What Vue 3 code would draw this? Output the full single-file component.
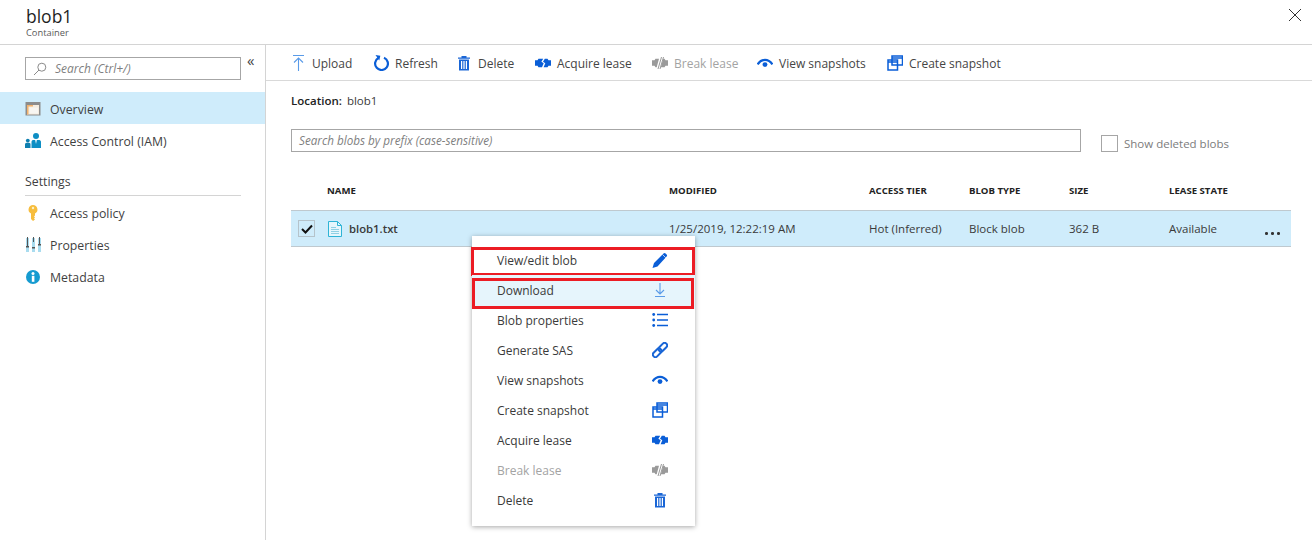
<template>
  <div class="blade">
    <header class="blade-head">
      <div>
        <h1 class="title">blob1</h1>
        <div class="subtitle">Container</div>
      </div>
      <svg class="close" width="14" height="14" viewBox="0 0 14 14" aria-label="Close">
        <path d="M1 1l12 12M13 1L1 13" stroke="#333" stroke-width="1" fill="none" />
      </svg>
    </header>

    <div class="blade-body">
      <aside class="side">
        <div class="search-row">
          <div class="side-search">
            <svg width="14" height="14" viewBox="0 0 14 14">
              <circle cx="8.8" cy="5.2" r="4" fill="none" stroke="#8a8a8a" />
              <path d="M6 8L1 13" stroke="#8a8a8a" fill="none" />
            </svg>
            <span>Search (Ctrl+/)</span>
          </div>
          <span class="collapse">«</span>
        </div>

        <nav class="nav top-nav">
          <div class="nav-item active">
            <svg width="16" height="16" viewBox="0 0 16 16">
              <rect x="0.500" y="1" width="15" height="13.500" fill="#8c8c8c" />
              <rect x="2" y="4" width="12" height="9.500" fill="#f5ecdf" />
              <rect x="2" y="4" width="6" height="1.500" fill="#f2b26e" />
              <rect x="2" y="4" width="1.500" height="9.500" fill="#f2b26e" />
              <rect x="4.500" y="6.500" width="8.500" height="6" fill="#f8f6f2" />
            </svg>
            <span>Overview</span>
          </div>
          <div class="nav-item">
            <svg width="16" height="16" viewBox="0 0 16 16">
              <circle cx="11" cy="3" r="3" fill="#0e8ec4" />
              <path d="M6.500 15V9C6.500 7.500 7.500 7 8.500 7h5c1.400 0 2.500.6 2.500 2v6z" fill="#0e8ec4" />
              <path d="M10 7l1 4 1-4z" fill="#d8eef8" />
              <circle cx="2.800" cy="7.600" r="1.900" fill="#0e7fb0" />
              <path d="M0 15v-3.500c0-1 .7-1.700 1.700-1.700h2.300c1 0 1.500.7 1.500 1.700V15z" fill="#0e7fb0" />
            </svg>
            <span>Access Control (IAM)</span>
          </div>
        </nav>

        <div class="nav-group">Settings</div>

        <nav class="nav">
          <div class="nav-item">
            <svg width="16" height="16" viewBox="0 0 16 16">
              <path d="M8 0a4.500 4.500 0 0 0-2 8.500V14l2 2 2-1.500-1-1 1-1-1-1 1-1V8.500A4.500 4.500 0 0 0 8 0z" fill="#f7bd3d" />
              <circle cx="8" cy="3" r="1.200" fill="#fdf0c4" />
            </svg>
            <span>Access policy</span>
          </div>
          <div class="nav-item">
            <svg width="16" height="16" viewBox="0 0 16 16">
              <rect x="1" y="1" width="3" height="14" fill="#a9dcef" />
              <rect x="7" y="1" width="3" height="14" fill="#a9dcef" />
              <rect x="13" y="1" width="3" height="14" fill="#a9dcef" />
              <rect x="2" y="0" width="1" height="9" fill="#555" />
              <rect x="1" y="9" width="3" height="1.500" fill="#555" />
              <rect x="8" y="0" width="1" height="5" fill="#555" />
              <rect x="7" y="10" width="3" height="1.500" fill="#555" />
              <rect x="14" y="0" width="1" height="7" fill="#555" />
              <rect x="13" y="7" width="3" height="1.500" fill="#555" />
            </svg>
            <span>Properties</span>
          </div>
          <div class="nav-item">
            <svg width="16" height="16" viewBox="0 0 16 16">
              <circle cx="8" cy="8" r="7" fill="#169bd0" />
              <rect x="6.800" y="6.800" width="2.600" height="6" fill="#fff" />
              <circle cx="8" cy="4.500" r="1.500" fill="#fff" />
            </svg>
            <span>Metadata</span>
          </div>
        </nav>
      </aside>

      <main class="content">
        <div class="toolbar">
          <div v-for="cmd in commands" :key="cmd.label" class="cmd" :class="{ disabled: cmd.disabled }">
            <svg width="16" height="16" viewBox="0 0 16 16" v-html="icons[cmd.icon]"></svg>
            <span>{{ cmd.label }}</span>
          </div>
        </div>

        <div class="panel">
          <div class="location"><b>Location:</b><span>blob1</span></div>

          <div class="filter-row">
            <div class="prefix-search">Search blobs by prefix (case-sensitive)</div>
            <label class="show-deleted"><i class="box"></i>Show deleted blobs</label>
          </div>

          <div class="grid-row grid-head">
            <span></span>
            <span v-for="col in columns" :key="col">{{ col }}</span>
          </div>
          <div class="grid-row grid-item">
            <span class="check">
              <svg width="12" height="10" viewBox="0 0 12 10">
                <path d="M1 5l3.500 3.500L11 1.500" fill="none" stroke="#111" stroke-width="2" />
              </svg>
            </span>
            <span class="file">
              <svg width="14" height="16" viewBox="0 0 14 16">
                <path d="M.5.500h9l4 4v11H.5z" fill="#e6f6fc" stroke="#2fb4d6" />
                <path d="M9.500.500v4h4" fill="none" stroke="#2fb4d6" />
                <path d="M3 6.500h5M3 8.500h8M3 10.500h8M3 12.500h8" stroke="#8fd0e4" />
              </svg>
              <span>blob1.txt</span>
            </span>
            <span>1/25/2019, 12:22:19 AM</span>
            <span>Hot (Inferred)</span>
            <span>Block blob</span>
            <span>362 B</span>
            <span>Available</span>
            <span class="more">
              <i></i><i></i><i></i>
            </span>
          </div>
        </div>
      </main>
    </div>

    <ul class="menu">
      <li
        v-for="item in menuItems"
        :key="item.label"
        class="menu-item"
        :class="{ disabled: item.disabled, hover: item.hover, marked: item.marked }"
      >
        <span>{{ item.label }}</span>
        <svg width="16" height="16" viewBox="0 0 16 16" v-html="icons[item.icon]"></svg>
      </li>
    </ul>
  </div>
</template>

<script setup>
const icons = {
  upload: '<path d="M3 .500h11" stroke="#5a9be8" fill="none"/><path d="M8.500 3V16M4 7.500L8.500 3 13 7.500" stroke="#5a9be8" stroke-width="1.100" fill="none"/>',
  download: '<path d="M3 14.500h10" stroke="#5a9be8" fill="none"/><path d="M8 1v11M4 8l4 4 4-4" stroke="#5a9be8" stroke-width="1.100" fill="none"/>',
  refresh: '<path d="M5.400 3A6.400 6.400 0 1 0 11 2.700" fill="none" stroke="#0a5ed7" stroke-width="2.200"/><path d="M2.500 0l4.800 .8-1 4.700z" fill="#0a5ed7"/>',
  trash: '<path d="M2 2.500h12v1.300H2zM5.500 1h5v2h-5z" fill="#1a66d6"/><path d="M3 4.500h10v11H3z" fill="#1a66d6"/><path d="M5 6h1.200v8H5zM7.400 6h1.200v8H7.400zM9.800 6H11v8H9.800z" fill="#fff"/>',
  lease: '<path d="M0 5.200h2.500L3.500 3.700H8.200L6.400 6.800l2.300 1.500-1.700 4H3.500l-1-1.500H0zM16 5.200h-2.500l-1-1.500H9.800L8 6.800l2.300 1.500-1.700 4h3.900l1-1.500H16z" fill="#0a5ed7"/>',
  breakLease: '<path d="M0 5.200h2.500L3.500 3.700H7L4.700 12.300H3.500l-1-1.500H0zM16 5.200h-2.500l-1-1.500H11.200L8.800 12.300h3.700l1-1.500H16z" fill="#9a9a9a"/><path d="M9.500 2L6 14M11.500 2L8 14" stroke="#9a9a9a" stroke-width="1" fill="none"/>',
  eye: '<path d="M.6 9.400C4.500 3.400 11.500 3.400 15.400 9.400" fill="none" stroke="#0a5ed7" stroke-width="2.200"/><circle cx="8" cy="9.600" r="2.400" fill="#0a5ed7"/>',
  snapshot: '<g fill="none" stroke="#0a5ed7" stroke-width="1.500"><rect x="5" y="1" width="10.500" height="9"/><path d="M5 3h10.500"/><rect x="1" y="5" width="9.500" height="10"/><path d="M1 7h9.500"/></g>',
  pencil: '<path d="M.5 16l1.500-5L11.500 1.500a1.500 1.500 0 0 1 2.100 0l1 1a1.500 1.500 0 0 1 0 2.100L5.500 14.500z" fill="#0a5ed7"/><path d="M10.500 2.500l3.200 3.200" stroke="#fff" stroke-width=".7"/>',
  list: '<circle cx="1.700" cy="2.500" r="1.400" fill="#0a5ed7"/><circle cx="1.700" cy="8" r="1.400" fill="#0a5ed7"/><circle cx="1.700" cy="13.500" r="1.400" fill="#0a5ed7"/><path d="M5 2.500h11M5 8h11M5 13.500h11" stroke="#0a5ed7" stroke-width="1.600" fill="none"/>',
  link: '<g transform="rotate(-45 8 8)" fill="none" stroke="#1a66d6" stroke-width="2"><rect x="-1" y="5.500" width="10" height="5" rx="2.500"/><rect x="7" y="5.500" width="10" height="5" rx="2.500"/></g>'
}

const commands = [
  { label: 'Upload', icon: 'upload' },
  { label: 'Refresh', icon: 'refresh' },
  { label: 'Delete', icon: 'trash' },
  { label: 'Acquire lease', icon: 'lease' },
  { label: 'Break lease', icon: 'breakLease', disabled: true },
  { label: 'View snapshots', icon: 'eye' },
  { label: 'Create snapshot', icon: 'snapshot' }
]

const columns = ['NAME', 'MODIFIED', 'ACCESS TIER', 'BLOB TYPE', 'SIZE', 'LEASE STATE']

const menuItems = [
  { label: 'View/edit blob', icon: 'pencil', marked: true },
  { label: 'Download', icon: 'download', marked: true, hover: true },
  { label: 'Blob properties', icon: 'list' },
  { label: 'Generate SAS', icon: 'link' },
  { label: 'View snapshots', icon: 'eye' },
  { label: 'Create snapshot', icon: 'snapshot' },
  { label: 'Acquire lease', icon: 'lease' },
  { label: 'Break lease', icon: 'breakLease', disabled: true },
  { label: 'Delete', icon: 'trash' }
]
</script>

<style>
html,
body {
  margin: 0;
  background: #fff;
}
</style>

<style scoped>
.blade {
  position: relative;
  width: 1312px;
  height: 540px;
  overflow: hidden;
  font-family: "Open Sans", "Noto Sans", sans-serif;
  font-size: 12px;
  color: #3a3a3a;
  background: #fff;
}

.blade-head {
  height: 44px;
  border-bottom: 1px solid #d4d4d4;
  padding-left: 26px;
  padding-right: 10px;
  display: flex;
  justify-content: space-between;
  align-items: flex-start;
}

.title {
  margin: 6px 0 0;
  font-size: 17.500px;
  font-weight: 400;
  line-height: 20px;
  color: #1f1f1f;
}

.subtitle {
  font-size: 9.300px;
  line-height: 14px;
  color: #595959;
}

.close {
  margin-top: 8px;
}

.blade-body {
  display: flex;
  height: 495px;
}

.side {
  width: 265px;
  flex: none;
  border-right: 1px solid #d4d4d4;
}

.search-row {
  display: flex;
  padding: 12px 0 0 25px;
  height: 47px;
  box-sizing: border-box;
}

.side-search {
  width: 216px;
  height: 23px;
  box-sizing: border-box;
  border: 1px solid #a6a6a6;
  display: flex;
  align-items: center;
  gap: 8px;
  padding-left: 7px;
  font-style: italic;
  font-size: 12px;
  color: #7f7f7f;
}

.collapse {
  margin-left: 6px;
  margin-top: -7px;
  font-size: 15px;
  line-height: 20px;
  color: #444;
}

.nav-item {
  height: 32px;
  box-sizing: border-box;
  display: flex;
  align-items: center;
  gap: 9px;
  padding-left: 25px;
  font-size: 12.300px;
  color: #3f3f3f;
}

.top-nav .nav-item {
  padding-top: 2px;
}

.nav-item.active {
  background: #cfecfb;
}

.nav-group {
  margin: 9px 24px 1px 25px;
  height: 30px;
  box-sizing: content-box;
  line-height: 33px;
  font-size: 12.300px;
  border-bottom: 1px solid #d4d4d4;
  color: #3f3f3f;
}

.content {
  flex: 1;
  min-width: 0;
}

.toolbar {
  height: 35px;
  box-sizing: content-box;
  border-bottom: 1px solid #d9d9d9;
  padding-left: 24px;
  display: grid;
  grid-template-columns: 83px 83px 79px 117px 105px 130px auto;
  align-items: center;
}

.cmd {
  display: flex;
  align-items: center;
  gap: 6px;
  padding-top: 1px;
  color: #454545;
}

.cmd.disabled,
.menu-item.disabled {
  color: #a3a3a3;
}

.panel {
  padding: 0 21px 0 25px;
}

.location {
  display: flex;
  gap: 5px;
  margin-top: 11px;
  height: 17px;
  line-height: 17px;
  font-size: 11.500px;
}

.location b {
  font-weight: 600;
  color: #222;
}

.filter-row {
  display: flex;
  align-items: flex-end;
  margin-top: 20px;
}

.prefix-search {
  width: 790px;
  height: 23px;
  box-sizing: border-box;
  border: 1px solid #a6a6a6;
  padding-left: 7px;
  line-height: 21px;
  font-style: italic;
  font-size: 11.700px;
  color: #7f7f7f;
}

.show-deleted {
  display: flex;
  align-items: center;
  gap: 6px;
  margin-left: 20px;
  color: #7c7c7c;
  font-size: 11.500px;
}

.box {
  width: 17px;
  height: 17px;
  box-sizing: border-box;
  border: 1px solid #a6a6a6;
}

.grid-row {
  display: grid;
  grid-template-columns: 36px 342px 200px 100px 100px 100px 1fr 30px;
  align-items: center;
}

.grid-head {
  margin-top: 24px;
  margin-bottom: 6px;
  height: 28px;
  font-size: 9.600px;
  font-weight: 700;
  color: #222;
}

.grid-item {
  height: 37px;
  box-sizing: border-box;
  background: #cfecfb;
  border-top: 1px solid #bfc9cf;
  border-bottom: 1px solid #bfc9cf;
  font-size: 11.500px;
}

.check {
  margin-left: 7px;
  width: 17px;
  height: 17px;
  box-sizing: border-box;
  border: 1px solid #b5c3cb;
  display: flex;
  align-items: center;
  justify-content: center;
}

.file {
  display: flex;
  align-items: center;
  gap: 7px;
  margin-left: 1px;
  font-size: 11.300px;
  font-weight: 600;
}

.more {
  display: flex;
  gap: 3.500px;
  margin-top: 10px;
  margin-left: 4px;
}

.more i {
  width: 2.500px;
  height: 2.500px;
  background: #333;
  border-radius: 50%;
}

.menu {
  position: absolute;
  left: 472px;
  top: 236px;
  width: 223px;
  height: 290px;
  box-sizing: border-box;
  margin: 0;
  padding: 9px 0 0;
  list-style: none;
  background: #fff;
  box-shadow: 0 1px 5px rgba(0, 0, 0, 0.35);
}

.menu-item {
  position: relative;
  height: 30px;
  display: flex;
  align-items: center;
  justify-content: space-between;
  padding: 0 27px 0 25px;
}

.menu-item.hover {
  background: #e6f5fc;
  box-shadow: 0 4px 0 #e6f5fc;
}

.menu-item.marked::after {
  content: "";
  position: absolute;
  inset: 2px 0 -1px -1px;
  border: 3px solid #ec1c24;
  pointer-events: none;
}

.menu-item.hover::after {
  inset: 3px 1px -4px 0;
}
</style>
